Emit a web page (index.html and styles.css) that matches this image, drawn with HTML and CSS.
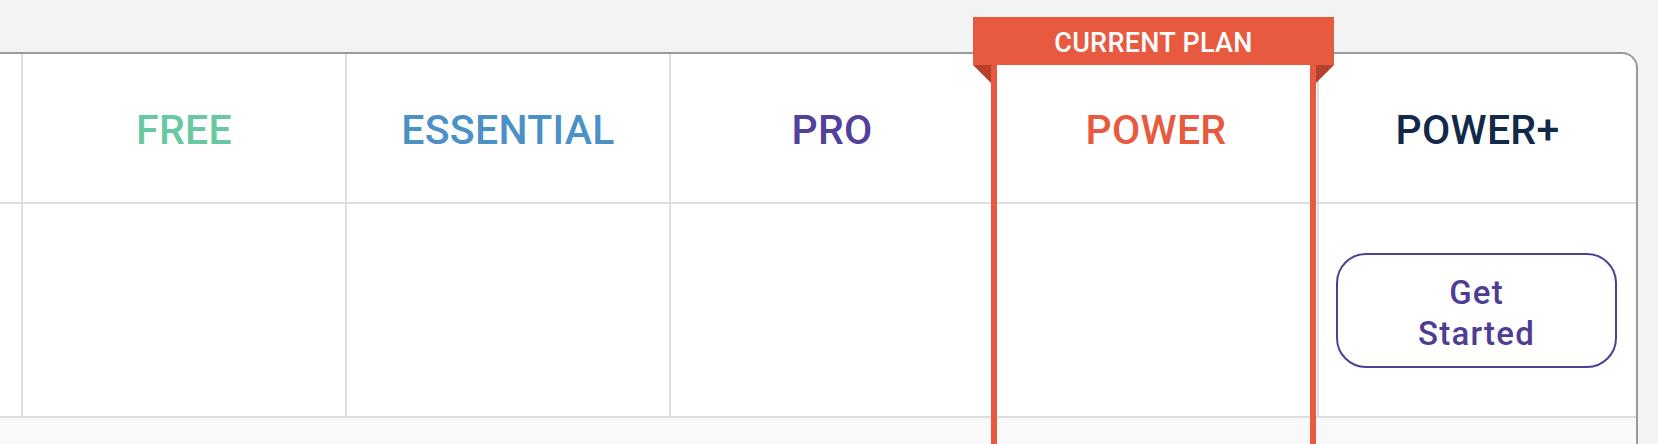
FILE: index.html
```html
<!DOCTYPE html>
<html lang="en">
<head>
<meta charset="utf-8">
<title>Plans</title>
<link rel="stylesheet" href="styles.css">
</head>
<body>
<div class="card">
  <div class="row head">
    <div class="label"></div>
    <div class="cell"><span class="plan free">FREE</span></div>
    <div class="cell"><span class="plan essential">ESSENTIAL</span></div>
    <div class="cell"><span class="plan pro">PRO</span></div>
    <div class="cell"><span class="plan power">POWER</span></div>
    <div class="cell last"><span class="plan powerplus">POWER+</span></div>
  </div>
  <div class="row body">
    <div class="label"></div>
    <div class="cell"></div>
    <div class="cell"></div>
    <div class="cell"></div>
    <div class="cell"></div>
    <div class="cell last"><button class="btn">Get Started</button></div>
  </div>
  <div class="row foot"></div>
  <div class="current">
    <div class="banner">CURRENT PLAN</div>
    <div class="current-col"></div>
  </div>
</div>
</body>
</html>
```

FILE: styles.css
```css
* { box-sizing: border-box; }
html, body { margin: 0; padding: 0; }
body {
  background: #f3f3f3;
  font-family: Roboto, "Noto Sans", sans-serif;
  overflow: hidden;
  height: 444px;
}
.card {
  position: relative;
  margin: 52px 20px 0 -100px;
  background: #fff;
  border-top: 2px solid #999;
  border-right: 2px solid #999;
  border-left: 2px solid #999;
  border-radius: 0 16px 0 0;
  height: 392px;
  overflow: visible;
}
.row {
  display: grid;
  grid-template-columns: 119px 324px 324px 324px 324px 1fr;
}
.head { height: 150px; border-bottom: 2px solid #ddd; }
.body { height: 214px; border-bottom: 2px solid #ddd; }
.foot { display: block; height: 26px; background: #f9f9f9; }
.cell {
  border-left: 2px solid #ddd;
  display: flex;
  align-items: center;
  justify-content: center;
}
.plan {
  font-size: 41px;
  font-weight: 500;
  line-height: 1;
  letter-spacing: 0.3px;
  padding-top: 4px;
}
.free { color: #68c8a1; }
.essential { color: #4b91c6; }
.pro { color: #52409b; }
.power { color: #e85a40; }
.powerplus { color: #13294a; }
.btn {
  width: 281px;
  height: 115px;
  padding: 6px 60px 0;
  border: 2px solid #4e3f93;
  border-radius: 30px;
  background: #fff;
  color: #4f3d94;
  font-family: Roboto, "Noto Sans", sans-serif;
  font-size: 33px;
  font-weight: 500;
  line-height: 41px;
  letter-spacing: 1.2px;
  margin-left: -2px;
}
.current {
  position: absolute;
  left: 1089px;
  width: 325px;
  top: -37px;
  bottom: 0;
  display: flex;
  flex-direction: column;
}
.banner {
  position: relative;
  margin: 0 -18px;
  height: 48px;
  background: #e85a40;
  color: #fff;
  font-size: 27px;
  font-weight: 500;
  letter-spacing: 0.3px;
  display: flex;
  align-items: center;
  justify-content: center;
  padding-top: 3px;
}
.banner::before, .banner::after {
  content: "";
  position: absolute;
  top: 100%;
  width: 0;
  height: 0;
  border-top: 18px solid #b5402c;
}
.banner::before { left: 0; border-left: 18px solid transparent; }
.banner::after { right: 0; border-right: 18px solid transparent; }
.current-col {
  flex: 1;
  border-left: 6px solid #e85a40;
  border-right: 6px solid #e85a40;
}
```
